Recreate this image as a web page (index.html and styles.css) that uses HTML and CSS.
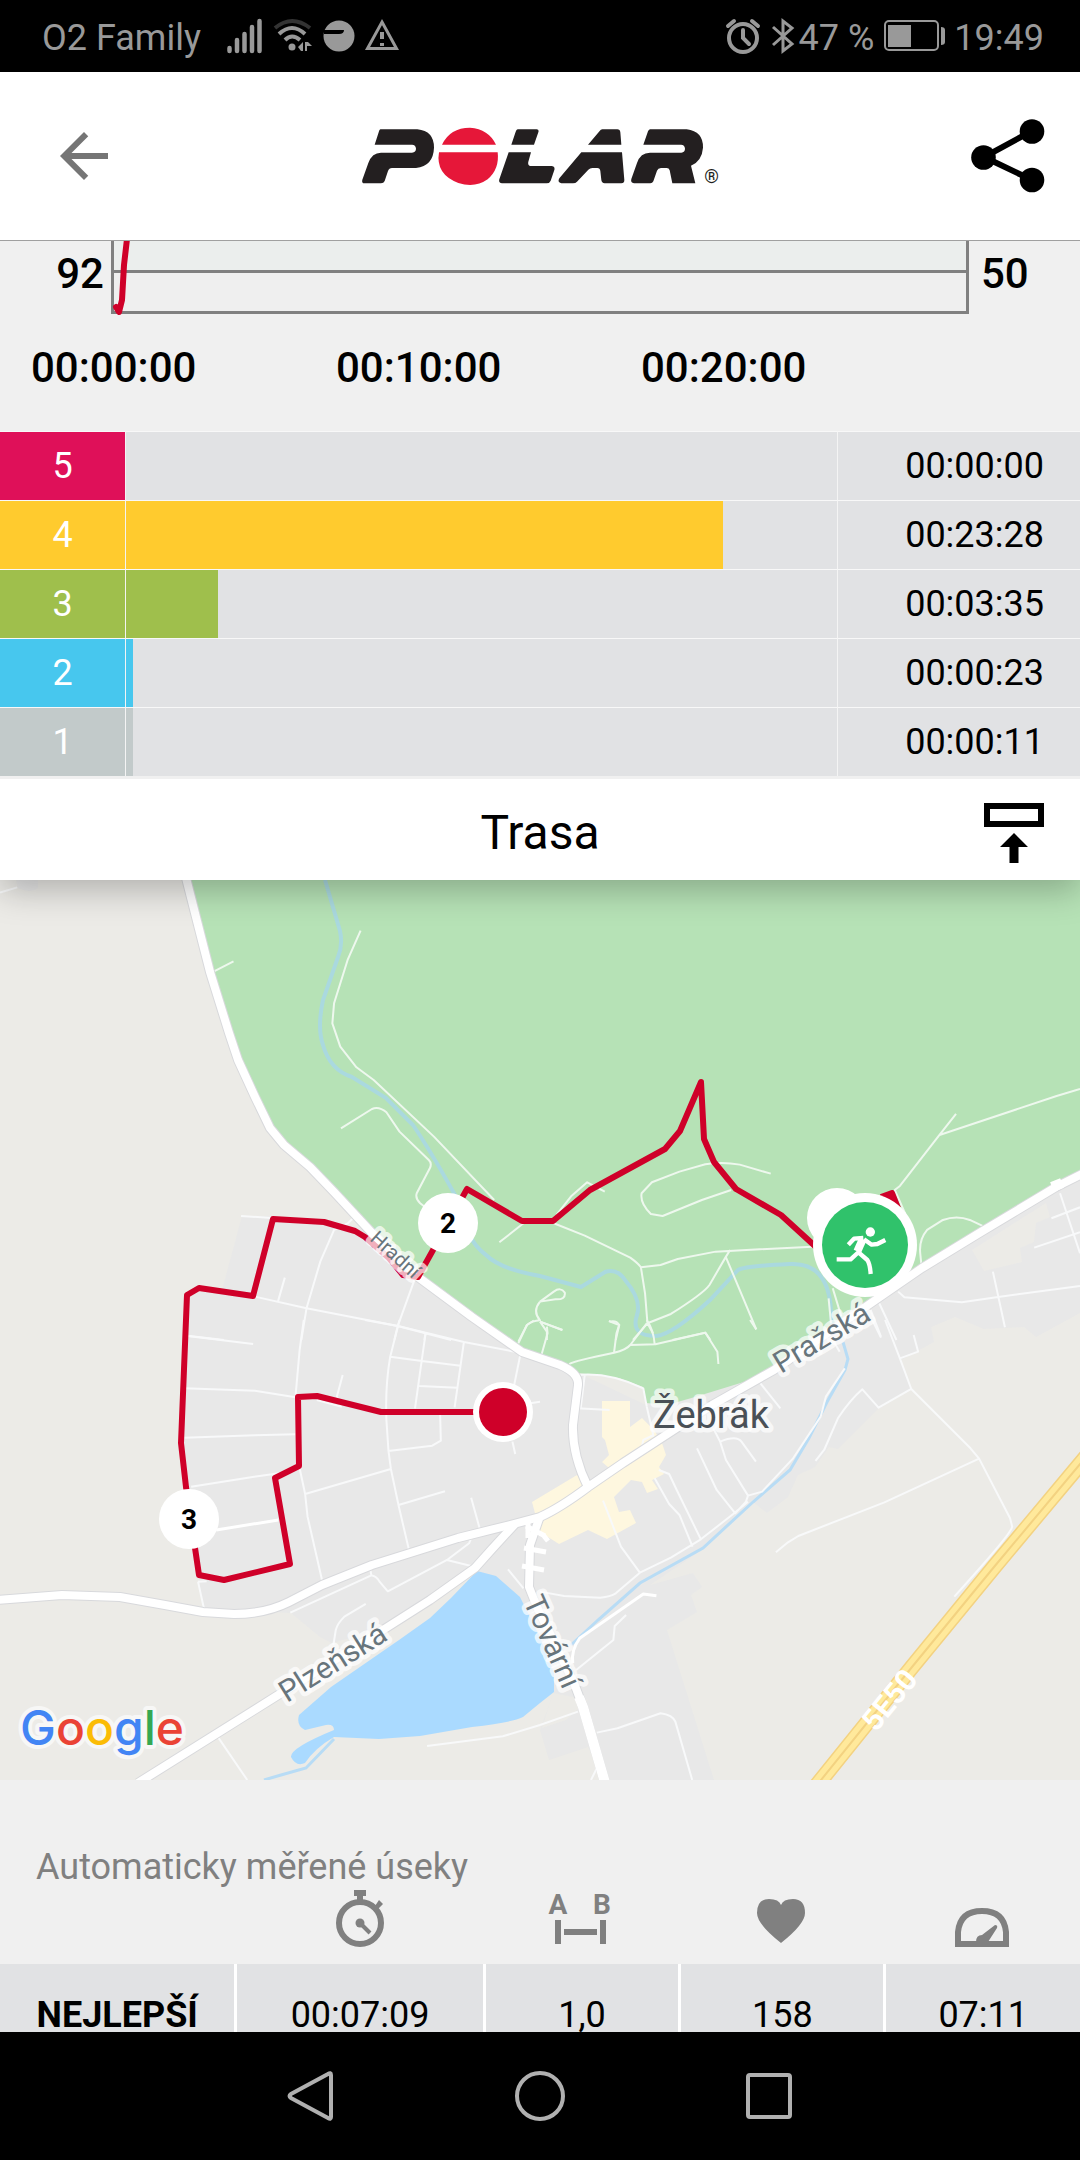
FILE: index.html
```html
<!DOCTYPE html>
<html lang="cs">
<head>
<meta charset="utf-8">
<meta name="viewport" content="width=device-width, initial-scale=1">
<title>Polar – Trasa</title>
<link rel="stylesheet" href="styles.css">
</head>
<body>
<div class="app">
  <div class="status">
    <div class="status-left">
      <span>O2 Family</span>
      <svg class="i-signal" viewBox="0 0 36 36" width="36" height="36"><path d="M2.500 33V30M10 33V22M17.500 33V16M25 33V9M32.500 33V3"/></svg>
      <svg class="i-wifi" viewBox="0 0 40 36" width="40" height="36"><path class="dim" d="M2 10Q19-4 37 10"/><path d="M6 16Q19 4 32 16M12 22Q19 15 27 22"/><circle cx="19" cy="29" r="3.500"/><path class="solid" d="M30 24V33H28L25 29ZM32 24V33H34L34 28H39L35 24Z"/></svg>
      <svg class="i-disc" viewBox="0 0 32 36" width="32" height="36"><circle cx="16" cy="18" r="15.500"/><path d="M1 14H16Q19 14 19 12" /></svg>
      <svg class="i-warn" viewBox="0 0 34 36" width="34" height="36"><path d="M17 4L31.500 30.500H2.500Z"/><path class="bang" d="M17 14V21M17 25V28"/></svg>
    </div>
    <div class="status-right">
      <svg class="i-alarm" viewBox="0 0 34 36" width="34" height="36"><circle cx="17" cy="20" r="14"/><path d="M17 12V20L23 26M2 8L8 3M32 8L26 3"/></svg>
      <svg class="i-bt" viewBox="0 0 22 36" width="22" height="36"><path d="M1 9L20 26L11 33V3L20 10L1 27"/></svg>
      <span>47 %</span>
      <svg class="i-batt" viewBox="0 0 62 32" width="62" height="32"><rect x="1" y="1" width="53" height="29" rx="4"/><path d="M4 5H27V27H4Z"/><path d="M57 7Q61 7 61 10V22Q61 25 57 25Z"/></svg>
      <time>19:49</time>
    </div>
  </div>

  <header class="topbar">
    <button class="icon-btn back" aria-label="Zpět"><svg viewBox="4 4 16 16" width="48" height="48"><path d="M20 11H7.830l5.590-5.590L12 4l-8 8 8 8 1.410-1.410L7.830 13H20v-2z"/></svg></button>
    <svg class="logo" viewBox="60 78 1080 174" width="360" height="58" role="img" aria-label="Polar">
      <g class="ink">
        <path d="M121 85H232Q282 90 282 140Q280 195 228 201H156Q147 201 144 210L134 240Q131 247 123 247H74Q64 247 67 236L85 186Q96 155 123 155H216Q228 153 228 143Q227 131 216 131H104L117 91Q118 86 121 85Z"/>
        <path d="M533 85H590Q598 86 595 94L582 131H514L527 92Q529 86 533 85ZM506 154H573L565 182Q562 195 575 195H634Q646 196 643 207L632 239Q629 247 620 247H486Q475 246 478 235Z"/>
        <path d="M787 85H832Q840 85 841 94L844 131H744L779 90Q782 85 787 85ZM724 154H846L853 237Q853 247 844 247H794Q785 246 784 237L781 210Q780 201 772 201H757Q750 201 745 206L711 242Q707 247 699 247H664Q651 244 658 232Z"/>
        <path d="M930 85H1040Q1090 91 1089 140Q1086 180 1053 194L1066 247H997L989 208Q987 201 980 201H963Q954 201 951 209L940 241Q937 247 931 247H882Q871 245 874 234L891 186Q901 155 930 155H1024Q1035 153 1035 143Q1034 131 1023 131H910L924 91Q926 86 930 85Z"/>
      </g>
      <path class="brand-red" d="M306 131Q330 80 390 80Q446 84 468 131ZM297 154H473Q479 204 443 235Q405 262 355 246Q286 220 297 154Z"/>
      <text x="1093" y="246" class="reg">®</text>
    </svg>
    <button class="icon-btn share" aria-label="Sdílet"><svg viewBox="0 0 74 74" width="74" height="74"><path d="M61 12L13 38L61 61"/><circle cx="61" cy="12.500" r="12.300"/><circle cx="12.500" cy="38.500" r="12.300"/><circle cx="61" cy="61" r="12.300"/></svg></button>
  </header>

  <main class="content">
    <section class="chart" aria-label="Graf">
      <div class="chart-row">
        <span class="axis-left">92</span>
        <div class="plot"><div class="plot-band"></div>
          <svg class="trace" viewBox="0 0 24 76" width="24" height="76"><path d="M16 -2L13 24L11 59L8 71L5 66"/></svg>
        </div>
        <span class="axis-right">50</span>
      </div>
      <div class="axis-times"><span>00:00:00</span><span>00:10:00</span><span>00:20:00</span></div>
    </section>

    <table class="zones">
      <tr class="z5"><th scope="row">5</th><td class="bar-cell"><div class="bar" style="width:0%"></div></td><td class="zone-time">00:00:00</td></tr>
      <tr class="z4"><th scope="row">4</th><td class="bar-cell"><div class="bar" style="width:84%"></div></td><td class="zone-time">00:23:28</td></tr>
      <tr class="z3"><th scope="row">3</th><td class="bar-cell"><div class="bar" style="width:13%"></div></td><td class="zone-time">00:03:35</td></tr>
      <tr class="z2"><th scope="row">2</th><td class="bar-cell"><div class="bar" style="width:1%"></div></td><td class="zone-time">00:00:23</td></tr>
      <tr class="z1"><th scope="row">1</th><td class="bar-cell"><div class="bar" style="width:1%"></div></td><td class="zone-time">00:00:11</td></tr>
    </table>

    <div class="section-bar">
      <h2>Trasa</h2>
      <button class="icon-btn collapse" aria-label="Sbalit"><svg viewBox="0 0 60 60" width="60" height="60"><rect x="3" y="3" width="54" height="18"/><path d="M30 30L44 44H34.500V60H25.500V44H16Z"/></svg></button>
    </div>

    <svg class="map" viewBox="0 880 1080 900" role="img" aria-label="Mapa trasy">
      <rect class="land" x="0" y="880" width="1080" height="900"/>
      <!-- built-up areas -->
      <path class="urban" d="M242 1216L273 1216L350 1225L372 1233L472 1317L566 1367L646 1405L760 1377L1056 1185L1080 1177V1313L1036 1337L1024 1327L984 1329L955 1317L931 1327L934 1342L901 1360L911 1389L877 1410L838 1449L829 1447L815 1467L798 1475L788 1497L767 1513L753 1502L705 1548L650 1585L693 1573L702 1587L691 1595L697 1612L667 1630L714 1780H604L588 1747L549 1760L540 1730L554 1692L477 1571L386 1628L332 1643L320 1637L291 1613L203 1609L181 1443L188 1293L222 1290Z"/>
      <path class="urban" d="M16 880H38V888Q30 894 18 888Z"/>
      <path class="land" d="M972 1250L984 1271L1022 1262L1020 1248L1034 1242L1036 1223L1050 1217L1046 1203ZM553 1693L588 1700L566 1720L542 1728Z"/>
      <!-- park -->
      <path class="green" d="M185 880L210 972L229 1033L255 1097L270 1128L284 1145L310 1167L334 1192L372 1233L418 1277L472 1317L522 1352L566 1367L578 1373L619 1378L643 1387L646 1403L667 1405L695 1397L760 1377L871 1303L981 1232L1056 1185L1080 1175V880Z"/>
      <path class="centre" d="M606 1401H630V1427L642 1418L654 1430L662 1443L666 1455L659 1467L664 1474L652 1480L658 1489L647 1493L642 1482L631 1480L614 1497L619 1512L630 1510L636 1523L607 1539L588 1530L559 1544L540 1532L532 1502L577 1475L588 1487L609 1468L602 1462L609 1455L605 1440L602 1437V1401Z"/>
      <path class="lake" d="M477 1571L496 1576L520 1597L540 1637L554 1673V1692L540 1703L523 1717Q510 1723 472 1727L420 1736L379 1739L334 1737Q315 1748 305 1763Q296 1767 291 1757Q290 1748 334 1730Q334 1724 326 1725L305 1730Q296 1726 299 1715L331 1687L399 1640L430 1618L451 1598Z"/>
      <!-- streams -->
      <g class="stream park-stream">
        <path d="M325 880L340 931Q343 945 338 957L323 1000Q317 1028 323 1045Q330 1070 352 1077L386 1098L413 1125Q430 1150 455 1195Q465 1240 486 1255Q500 1269 540 1276L581 1287L605 1272Q617 1268 625 1280Q642 1300 637 1315Q630 1336 656 1336Q672 1335 710 1300L738 1270Q745 1266 790 1264Q828 1262 831 1310L832 1325"/>
      </g>
      <g class="stream">
        <path d="M843 1342L848 1359L845 1370L827 1402L809 1438L790 1470L753 1502L703 1548L640 1583L598 1620L571 1645M334 1739L306 1768L281 1775L264 1780"/>
      </g>
      <!-- side streets, drawn tile by tile -->
      <g class="streets on-green" transform="translate(0 860) scale(.3444 .3333)">
        <path d="M1047 212L1010 298L970 430L965 490L988 560L1035 622L1085 660L1260 830L1435 1020"/>
        <path d="M620 335L678 304M990 805L1080 747Q1100 738 1122 757L1160 815L1245 900Q1255 910 1248 925L1210 1000Q1205 1015 1220 1030L1245 1050M1450 1147L1520 1090"/>
        <path d="M1505 1445L1530 1395Q1545 1382 1568 1381Q1545 1354 1568 1325"/>
      </g>
      <g class="streets" transform="translate(0 860) scale(.3444 .3333)">
        <path d="M700 1068L800 1075M1030 1070L1010 1090L970 1110L930 1205L890 1345L875 1440M740 1310L890 1345L1155 1398L1310 1440M1205 1255L1155 1398L1145 1440M827 1253L807 1325M1236 1418L1232 1440M550 1428L650 1440M0 98L50 82"/>
      </g>
      <g class="streets on-green" transform="translate(540 860) scale(.3444 .3333)">
        <path d="M40 1090L130 1127L262 1193Q285 1210 293 1222L350 1215L400 1197L510 1175L790 1160M293 1222L305 1300L312 1390L328 1420M552 1170L540 1190L492 1275Q475 1300 380 1362L312 1390L270 1440M540 1192L628 1408M555 990L470 1020L356 1068L322 1062Q290 1030 295 1000L325 967L405 935L480 913Q530 905 580 914L670 941M48 1065L92 1007L137 967L188 995"/>
        <path d="M1208 762L1160 825L1045 978L1030 990L1060 1060M1160 825L1500 708L1568 687M1285 1098L1248 1080Q1210 1065 1170 1080L1124 1110Q1100 1140 1104 1180L1108 1220L1085 1240M850 1285L875 1370M838 1315L845 1390M0 1325L45 1318Q75 1320 72 1298Q60 1280 40 1295L0 1325M0 1385L65 1410M0 1385L20 1415V1440M202 1385Q222 1380 230 1395L220 1440M385 1440L480 1418L495 1440"/>
      </g>
      <g class="streets" transform="translate(540 860) scale(.3444 .3333)">
        <path d="M1040 1295L1058 1312L1225 1327L1330 1311L1568 1278M1315 1235L1350 1402M1510 1000L1568 1180M1485 1075L1568 1042M1435 1163L1568 1117M985 1330L1035 1440M960 1350L990 1430"/>
      </g>
      <g class="streets" transform="translate(0 1320) scale(.3444 .3333)">
        <path class="on-green" d="M1505 70L1530 15L1550 2"/>
        <path d="M882 0L870 90L858 230M1060 0L1155 18L1236 38L1347 66L1510 98M1160 0L1133 110Q1118 200 1122 300L1128 393L1135 447L1157 555L1187 688M1133 110L1225 123L1337 137M1236 38L1222 140L1205 265M1347 66L1320 262M1217 198L1328 203M1512 98L1493 195M545 48L735 72M535 205L740 212L858 232M995 165L978 230L990 260L920 240M535 353L740 346L858 343M555 500L738 470L810 460M870 445L886 522L893 590L935 780M886 522L1135 447M1128 393L1255 377L1280 362L1278 285M1157 555L1292 514M1368 533L1394 630M1488 365L1496 402M1540 250L1568 245M575 785L592 865M575 785L600 784M843 878L1078 766L1075 745M1078 766Q1095 770 1102 785L1126 814L1298 720L1362 670L1370 650M1298 720L1368 738M1062 852L1000 890Q980 910 975 930L968 975M632 1250L718 1380M1240 1278L1460 1249L1568 1215M1475 748L1520 805"/>
        <path class="bright" d="M628 630L808 600"/>
      </g>
      <g class="streets on-green" transform="translate(540 1320) scale(.3444 .3333)">
        <path d="M85 132Q100 122 215 98Q250 90 262 75L310 10M262 75L335 73L480 38L515 95L518 132M310 0Q330 30 333 73M215 98L222 40L230 15L200 3M5 102L22 40L20 20M0 5L65 30M610 0L628 28"/>
      </g>
      <g class="streets" transform="translate(540 1320) scale(.3444 .3333)">
        <path d="M108 165Q200 155 300 205L310 260M130 165L118 265M108 265L202 270M310 260L330 350M632 180L698 265M330 345L300 360L296 380M503 325L523 365L540 420L604 527L598 545L567 580L513 510L456 385M523 365Q570 345 585 365L627 425M604 527L645 515L735 415L815 290L830 230L885 145M345 450L375 462L397 510L467 658M333 475L375 552L405 585L443 680M183 542L205 600L235 680L290 758M0 815L70 828L175 833Q205 830 220 820L290 758L380 713L467 658L560 583L604 545M1002 0L1045 115L1078 207L1250 385L1275 416L1365 595L1371 620Q1370 640 1203 830M1045 115L1098 95L1085 45M1078 207L983 263L936 208Q900 240 865 295L825 390L800 423M1275 416L1000 547L750 648L720 667L685 697M965 0L990 53M845 50L870 95M250 885L217 918L213 960L105 1050M165 1238L225 1225L350 1180Q385 1185 393 1205L442 1380M0 1215L110 1175M165 1345L148 1380"/>
        <path class="bright" d="M338 827L300 822L115 955Q90 990 95 1030"/>
      </g>
      <!-- main roads: casing first, surface over it -->
      <g class="casing">
        <path id="hradni" d="M185 874L210 972L229 1033L238 1060L255 1097L270 1128L284 1145L310 1167L334 1192L372 1233L418 1277L472 1317L522 1352L560 1365Q579 1373 578 1385L573 1425Q572 1455 588 1487"/>
        <path id="prazska" d="M1086 1172L1056 1187L981 1232L922 1268L774 1370L712 1405L623 1463L588 1487Q560 1508 540 1517L510 1525L458 1538L372 1565L322 1585L289 1602Q265 1614 234 1614L203 1612L165 1605L120 1597L62 1595L-4 1600"/>
        <path id="plzenska" d="M515 1524L492 1549L475 1568L430 1600L386 1628L275 1697L138 1783"/>
        <path id="tovarni" d="M540 1516L530 1545L529 1587L537 1607L574 1683L583 1707L606 1786"/>
      </g>
      <g class="surface">
        <use href="#hradni"/><use href="#prazska"/><use href="#plzenska"/><use href="#tovarni"/>
        <path d="M579 1697L583 1707L606 1786M1052 1187L1062 1183"/>
      </g>
      <path class="crossing" d="M526 1526L545 1536M524 1548L546 1552M522 1566L544 1570M528 1523V1538M544 1536L548 1541"/>
      <path class="motorway-edge" d="M1086 1457L994 1567L912 1667L817 1785"/>
      <path class="motorway" d="M1086 1457L994 1567L912 1667L817 1785"/>
      <path class="motorway-mid" d="M1086 1457L994 1567L912 1667L817 1785"/>
      <!-- recorded route -->
      <path class="route" d="M881 1197L892 1193L898 1208M816 1247L781 1215L736 1189L714 1162L704 1139L701 1082L680 1131L665 1149L590 1190L553 1221H522L467 1189L462 1198L418 1277L403 1275L389 1258L365 1237L355 1231L324 1222L273 1219L253 1296L199 1288L187 1295L181 1443L186 1487L199 1575L224 1580L290 1564L275 1478L299 1466L298 1397L317 1396L381 1412H480"/>
      <path class="route-fill" d="M875 1198L893 1190L899 1208Z"/>
      <!-- labels -->
      <text class="street halo small" transform="translate(369 1240) rotate(42)">Hradní</text>
      <text class="street halo" transform="translate(781 1374) rotate(-31)">Pražská</text>
      <text class="street halo" transform="translate(287 1703) rotate(-32)">Plzeňská</text>
      <text class="street halo" transform="translate(523 1601) rotate(66)">Tovární</text>
      <text class="town halo" x="653" y="1428">Žebrák</text>
      <text class="shield" transform="translate(876 1733) rotate(-51)">5E50</text>
      <text class="google" x="20" y="1745"><tspan class="g-blue">G</tspan><tspan class="g-red">o</tspan><tspan class="g-yellow">o</tspan><tspan class="g-blue">g</tspan><tspan class="g-green">l</tspan><tspan class="g-red">e</tspan></text>
      <!-- markers -->
      <circle class="pin" cx="448" cy="1223" r="30"/><text class="pin-text" x="448" y="1233">2</text>
      <circle class="pin" cx="189" cy="1519" r="30"/><text class="pin-text" x="189" y="1529">3</text>
      <circle class="pin" cx="503" cy="1412" r="30"/><circle class="finish" cx="503" cy="1412" r="24"/>
      <circle class="pin" cx="837" cy="1218" r="30"/>
      <circle class="pin" cx="865" cy="1245" r="52"/><circle class="start" cx="865" cy="1245" r="43"/>
      <g class="runner" transform="translate(780 1180) scale(.3333)">
        <circle cx="271" cy="156" r="14"/>
        <path class="torso" d="M248 178L232 214"/>
        <path d="M250 174L222 176L205 194M252 178L275 194L292 192L316 180M236 216L212 238H170M232 214L262 240Q270 252 272 282"/>
      </g>
    </svg>

    <section class="laps">
      <h3>Automaticky měřené úseky</h3>
      <table class="lap-table">
        <colgroup><col class="c1"><col class="c2"><col class="c3"><col class="c4"><col class="c5"></colgroup>
        <thead><tr>
          <td></td>
          <th scope="col" aria-label="Čas"><svg viewBox="0 0 60 60" width="60" height="60"><circle class="line" cx="31" cy="35" r="21"/><path d="M25 2H37V8H34V14H28V8H25ZM46 18L50 12L54 16L49 21Z"/><circle cx="31" cy="35" r="4.500"/><path class="hand" d="M32 36L41 45"/></svg></th>
          <th scope="col" aria-label="Vzdálenost"><svg viewBox="0 0 62 60" width="62" height="60"><text x="9" y="26">A</text><text x="53" y="26">B</text><path d="M6 32H12V56H6ZM51 32H57V56H51ZM15 41H48V47H15Z"/></svg></th>
          <th scope="col" aria-label="Tepová frekvence"><svg viewBox="0 0 60 60" width="60" height="60"><path d="M30 55Q6 36 6 25Q6 11 18 11Q28 11 30 17Q32 11 42 11Q54 11 54 25Q54 36 30 55Z"/></svg></th>
          <th scope="col" aria-label="Tempo"><svg viewBox="0 0 60 60" width="60" height="60"><path class="line" d="M6 56V44Q8 23 30 23Q52 23 54 44V56Z"/><path d="M24 54Q24 47 30 47L43 37Q46 37 45 40L36 54Z"/></svg></th>
        </tr></thead>
        <tbody><tr><th scope="row">NEJLEPŠÍ</th><td>00:07:09</td><td>1,0</td><td>158</td><td>07:11</td></tr></tbody>
      </table>
    </section>
  </main>

  <nav class="sysnav">
    <button class="icon-btn" aria-label="Zpět"><svg viewBox="0 0 52 52" width="52" height="52"><path d="M43 4Q46 2 46 5V47Q46 50 43 48L6 28Q3 26 6 24Z"/></svg></button>
    <button class="icon-btn" aria-label="Domů"><svg viewBox="0 0 52 52" width="52" height="52"><circle cx="26" cy="26" r="23"/></svg></button>
    <button class="icon-btn" aria-label="Poslední"><svg viewBox="0 0 52 52" width="52" height="52"><rect x="5" y="5" width="42" height="42" rx="2"/></svg></button>
  </nav>
</div>
</body>
</html>
```
FILE: styles.css
```css
* { box-sizing: border-box; }
body { margin: 0; background: #f0f0f0; color: #000; font-family: Roboto, "Noto Sans", sans-serif; font-size: 36px; line-height: 42px; }
svg { display: block; flex: none; overflow: visible; }
h2, h3 { margin: 0; font-weight: 400; }
.app { display: flex; flex-direction: column; height: 100vh; overflow: hidden; }
.icon-btn { display: block; padding: 0; border: 0; background: none; }

.status { flex: none; display: flex; justify-content: space-between; align-items: center; height: 72px; padding: 4px 36px 0 42px; background: #000; color: #999; }
.status-left, .status-right { display: flex; align-items: center; }
.status-left { gap: 10px; }
.status-left span { margin-right: 16px; }
.status-right span { margin: 0 10px 0 5px; }
.status svg { fill: none; stroke: #999; stroke-width: 3; margin-top: -4px; }
.i-signal path { stroke-width: 4.500; stroke-linecap: round; }
.i-wifi path { stroke-width: 4; }
.i-wifi .dim { stroke: #333; }
.i-wifi circle, .status .i-wifi .solid { fill: #999; stroke: none; }
.i-disc circle { fill: #999; stroke: none; }
.i-disc path { stroke: #000; stroke-width: 4; }
.i-warn .bang { stroke-width: 4; }
.i-alarm { stroke-linecap: round; }
.i-alarm circle, .i-alarm path { stroke-width: 4; }
.i-bt { margin-left: 12px; }
.i-batt rect { stroke-width: 2; }
.i-batt path { fill: #999; stroke: none; }
.status-right time { margin-left: 8px; }

.topbar { flex: none; display: grid; grid-template-columns: 1fr auto 1fr; align-items: center; height: 169px; background: #fff; border-bottom: 1px solid #a0a0a0; }
.back { margin-left: 60px; justify-self: start; fill: #757575; }
.share { margin-right: 35px; justify-self: end; }
.share path { fill: none; stroke: #000; stroke-width: 6; }
.ink { fill: #231f20; }
.brand-red { fill: #e61739; }
.reg { font-size: 56px; fill: #231f20; }

.content { flex: 1; min-height: 0; overflow: hidden; }
.chart { padding-bottom: 38px; font-size: 42px; line-height: 50px; font-weight: 500; }
.chart-row { display: grid; grid-template-columns: 111px 1fr 111px; height: 73px; }
.axis-left { padding: 8px 7px 0 0; text-align: right; }
.axis-right { padding: 8px 0 0 12px; }
.plot { position: relative; border: solid #808080; border-width: 0 3px 3px; background: #efefef; }
.plot-band { height: 32px; background: #ebeeed; border-bottom: 3px solid #808080; }
.trace { position: absolute; left: -3px; top: 0; overflow: hidden; }
.trace path { fill: none; stroke: #cf0029; stroke-width: 6; stroke-linecap: round; stroke-linejoin: round; }
.axis-times { display: flex; gap: 140px; padding: 29px 0 0 31px; }
.axis-times span { width: 165px; text-align: center; flex: none; }

.zones { position: relative; z-index: 2; width: 100%; border-spacing: 0; table-layout: fixed; background: #e1e2e4; border-bottom: 3px solid #f0f0f0; }
.zones th, .zones td { height: 69px; padding: 0; border-top: 1px solid #f8f8f8; }
.zones th { width: 125px; background: var(--zone); color: #fff; font-weight: 400; }
.bar-cell { border-left: 1px solid #f4f4f4; }
.bar { height: 68px; background: var(--zone); }
.zones .zone-time { width: 243px; padding-right: 36px; border-left: 1px solid #f4f4f4; text-align: right; }
.z5 { --zone: #df1059; }
.z4 { --zone: #ffcb2e; }
.z3 { --zone: #9fbf4c; }
.z2 { --zone: #47c7ee; }
.z1 { --zone: #c2caca; }

.section-bar { position: relative; z-index: 1; display: grid; grid-template-columns: 1fr auto 1fr; align-items: center; height: 101px; padding-top: 6px; background: #fff; box-shadow: 0 10px 34px rgba(0, 0, 0, .26); }
.section-bar h2 { grid-column: 2; font-size: 48px; line-height: 56px; }
.collapse { justify-self: end; margin-right: 36px; }
.collapse rect { fill: none; stroke: #000; stroke-width: 6; }

.map { width: 100%; height: auto; overflow: hidden; }
.land { fill: #ecebe7; }
.urban { fill: #e8e8e8; }
.green { fill: #b6e2b6; }
.centre { fill: #fef7df; }
.lake { fill: #aadaff; }
.stream { fill: none; stroke: #b8dcf5; stroke-width: 3; }
.park-stream { stroke: #aad9df; stroke-width: 4; }
.streets { fill: none; stroke: #f8f9fa; stroke-width: 2; stroke-linejoin: round; }
.streets path { vector-effect: non-scaling-stroke; }
.on-green { stroke: #eef8ee; }
.bright { stroke: #fff; stroke-width: 3; }
.casing, .surface { fill: none; stroke-linejoin: round; }
.casing { stroke: #d8d9dc; stroke-width: 10; }
.surface { stroke: #fff; stroke-width: 8; }
.surface path { stroke-width: 10; }
.casing path, .surface use path { stroke-width: inherit; }
.crossing { fill: none; stroke: #fff; stroke-width: 5; }
.motorway-edge, .motorway, .motorway-mid { fill: none; }
.motorway-edge { stroke: #f3d281; stroke-width: 16; }
.motorway { stroke: #ffe99b; stroke-width: 13; }
.motorway-mid { stroke: #f3d281; stroke-width: 2; }
.route { fill: none; stroke: #cf0029; stroke-width: 6; stroke-linejoin: round; }
.route-fill, .finish { fill: #cf0029; }
.pin { fill: #fff; }
.pin-text { font-size: 28px; font-weight: 700; text-anchor: middle; }
.start { fill: #30c26b; }
.runner { fill: #fff; }
.runner path { fill: none; stroke: #fff; stroke-width: 13; stroke-linejoin: round; }
.runner .torso { stroke-width: 24; }
.halo { paint-order: stroke; stroke: rgba(255, 255, 255, .7); stroke-width: 9; stroke-linejoin: round; }
.street { font-size: 30px; fill: #68757c; }
.small { font-size: 20px; }
.town { font-size: 38px; fill: #4a5056; }
.shield { font-size: 30px; font-weight: 700; fill: #fff; }
.google { font-family: Inter, Roboto, sans-serif; font-size: 48px; font-weight: 500; paint-order: stroke; stroke: #f7f7f6; stroke-width: 8; stroke-linejoin: round; }
.g-blue { fill: #4285f4; }
.g-red { fill: #ea4335; }
.g-yellow { fill: #fbbc05; }
.g-green { fill: #34a853; }

.laps { padding-top: 66px; }
.laps h3 { padding-left: 36px; font-size: 36px; line-height: 42px; color: #808080; }
.lap-table { width: 100%; table-layout: fixed; border-spacing: 0; text-align: center; }
.c1 { width: 21.7%; }
.c2 { width: 23%; }
.c3 { width: 18.1%; }
.c4 { width: 19%; }
.c5 { width: 18.2%; }
.lap-table thead th, .lap-table thead td { height: 76px; padding: 0; vertical-align: top; }
.lap-table svg { margin: 0 auto; fill: #808080; font-family: "Liberation Sans Narrow", Roboto, sans-serif; font-size: 28px; font-weight: 700; text-anchor: middle; }
.lap-table .line, .lap-table .hand { fill: none; stroke: #808080; stroke-width: 6; }
.lap-table .hand { stroke-width: 4; }
.lap-table tbody th, .lap-table tbody td { padding: 30px 0; background: #e1e2e4; border-left: 3px solid #fff; }
.lap-table tbody th { border-left: 0; font-weight: 700; }

.sysnav { position: relative; z-index: 3; flex: none; display: flex; justify-content: center; align-items: center; gap: 177px; height: 128px; background: #000; }
.sysnav svg { fill: none; stroke: #b0b0b0; stroke-width: 4; }
```
